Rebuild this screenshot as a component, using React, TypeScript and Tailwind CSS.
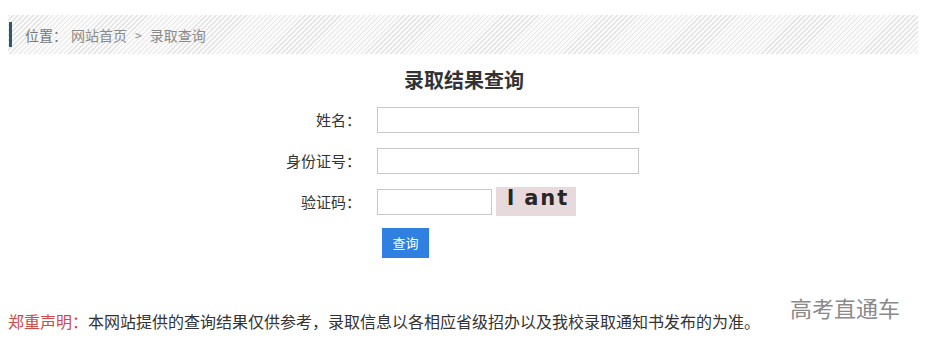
import React from "react";

const cjk = "font-['Microsoft_YaHei','Noto_Sans_CJK_SC',sans-serif]";

export default function App() {
  return (
    <div className={`relative w-[928px] h-[347px] bg-white overflow-hidden ${cjk}`}>
      {/* breadcrumb */}
      <div className="mt-[15px] ml-[8px] mr-[10px] h-[39px] flex items-center bg-[repeating-linear-gradient(135deg,#e4e4e4_0px,#e4e4e4_1px,#fafafa_1px,#fafafa_3.5px)]">
        <div className="ml-[1px] w-[3px] h-[25px] bg-[#2d5866]" />
        <div className="ml-[13px] flex items-center text-[14px] leading-[20px] text-[#8a8a8a]">
          <span className="text-[#777]">位置：</span>
          <span className="ml-[4px]">网站首页</span>
          <span className="mx-[8px] text-[12px]">&gt;</span>
          <span>录取查询</span>
        </div>
      </div>

      {/* title */}
      <h1 className="mt-[12px] text-center text-[20px] leading-[28px] font-bold text-[#333]">
        录取结果查询
      </h1>

      {/* form */}
      <div className="mt-[13px] flex flex-col text-[15px] text-[#333]">
        <div className="flex items-center h-[26px]">
          <label className="w-[361px] text-right leading-[26px]">姓名：</label>
          <input className="ml-[16px] w-[262px] h-[26px] border border-[#c8c8c8] outline-none" />
        </div>
        <div className="mt-[15px] flex items-center h-[26px]">
          <label className="w-[361px] text-right leading-[26px]">身份证号：</label>
          <input className="ml-[16px] w-[262px] h-[26px] border border-[#c8c8c8] outline-none" />
        </div>
        <div className="mt-[13px] flex items-center h-[29px]">
          <label className="w-[361px] text-right leading-[26px]">验证码：</label>
          <input className="ml-[16px] w-[115px] h-[26px] mt-[1px] border border-[#c8c8c8] outline-none" />
          <div className="ml-[4px] w-[80px] h-[29px] bg-[#e8d9dc] flex items-start pl-[11px] font-['DejaVu_Sans',sans-serif] font-bold text-[21px] leading-[22px] tracking-[2px] text-[#2b2626]">
            <span className="text-[#1f2a1c]">l</span>
            <span className="ml-[8px]">ant</span>
          </div>
        </div>
        <div className="mt-[12px] pl-[382px]">
          <button className="w-[47px] h-[30px] bg-[#2f80e0] text-white text-[13px] leading-[30px]">
            查询
          </button>
        </div>
      </div>

      {/* footer */}
      <p className="mt-[51px] ml-[8px] text-[16px] leading-[24px] text-[#333]">
        <span className="text-[#cc4b48]">郑重声明：</span>
        本网站提供的查询结果仅供参考，录取信息以各相应省级招办以及我校录取通知书发布的为准。
      </p>

      <div className="absolute left-[790px] top-[292px] text-[22px] leading-[30px] text-[#8a8a8a]">
        高考直通车
      </div>
    </div>
  );
}
